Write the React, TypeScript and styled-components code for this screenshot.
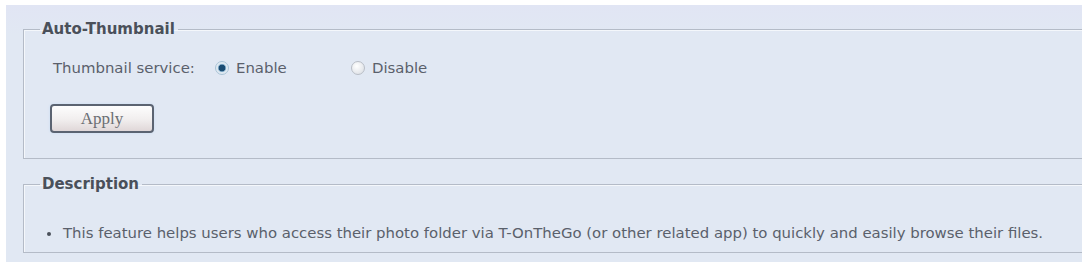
import React, { useState } from 'react';
import styled, { createGlobalStyle } from 'styled-components';

const GlobalStyle = createGlobalStyle`
  html, body {
    margin: 0;
    padding: 0;
    background: #ffffff;
    overflow: hidden;
  }
  body {
    font-family: "DejaVu Sans", Verdana, sans-serif;
    font-size: 14.9px;
    color: #5a606b;
  }
`

const Panel = styled.div`
  margin: 5px 2px 0 6px;
  height: 257px;
  background: linear-gradient(#e1e5f4 0px, #e1e8f3 30px, #e1e8f3 100%);
  padding: 0 0 0 17px;
  box-sizing: border-box;
  overflow: hidden;
`

const Group = styled.fieldset<{ $top: number; $height: number }>`
  margin: ${(p) => p.$top}px -30px 0 0;
  height: ${(p) => p.$height}px;
  padding: 0 0 0 16px;
  border: 1px solid #b4bbc7;
  border-right: none;
  box-shadow: inset 1px 1px 0 #f4f7fb;
  box-sizing: border-box;
  min-width: 0;
`

const Legend = styled.legend`
  padding: 0 3px 0 2px;
  font-size: 15px;
  line-height: 18px;
  font-weight: bold;
  color: #4a505a;
`

const Row = styled.div`
  display: flex;
  align-items: center;
  height: 20px;
  margin: 20px 0 0 13px;
`

const Label = styled.span`
  width: 162px;
  white-space: nowrap;
`

const Choice = styled.label<{ $width?: number }>`
  display: flex;
  align-items: center;
  gap: 7px;
  width: ${(p) => (p.$width ? `${p.$width}px` : 'auto')};
  white-space: nowrap;
  cursor: pointer;
`

const Radio = styled.input`
  appearance: none;
  margin: 0;
  flex: none;
  width: 14px;
  height: 14px;
  border-radius: 50%;
  border: 1px solid #b9bec6;
  background: radial-gradient(circle at 40% 35%, #ffffff, #d7dbe1);
  box-sizing: border-box;
  &:checked {
    border-color: #a9c3d6;
    background: radial-gradient(circle, #1b4c72 0 3px, #6f9bbb 3.5px, #dbe7f0 4.5px, #eef3f7 100%);
  }
`

const ApplyButton = styled.button`
  display: block;
  margin: 26px 0 0 10px;
  width: 104px;
  height: 29px;
  border: 2px solid #5b6371;
  border-radius: 4px;
  background: linear-gradient(#fdfdfd, #f1eeee 55%, #e0d7d8);
  box-shadow: 0 0 3px #c9dcf2;
  font-family: "Liberation Serif", "Times New Roman", serif;
  font-size: 17px;
  color: #6b6e73;
  padding: 0;
  cursor: pointer;
`

const Bullet = styled.ul`
  margin: 31px 0 0 0;
  padding: 0 0 0 23px;
  list-style: none;
  li {
    position: relative;
    line-height: 18px;
    white-space: nowrap;
  }
  li::before {
    content: '';
    position: absolute;
    left: -16px;
    top: 8px;
    width: 4px;
    height: 4px;
    border-radius: 50%;
    background: #4a505a;
  }
`

export default function App() {
  const [service, setService] = useState('enable')

  return (
    <>
      <GlobalStyle />
      <Panel>
        <Group $top={15} $height={139}>
          <Legend>Auto-Thumbnail</Legend>
          <Row>
            <Label>Thumbnail service:</Label>
            <Choice $width={136}>
              <Radio
                type="radio"
                name="thumb"
                checked={service === 'enable'}
                onChange={() => setService('enable')}
              />
              Enable
            </Choice>
            <Choice>
              <Radio
                type="radio"
                name="thumb"
                checked={service === 'disable'}
                onChange={() => setService('disable')}
              />
              Disable
            </Choice>
          </Row>
          <ApplyButton>Apply</ApplyButton>
        </Group>
        <Group $top={16} $height={78}>
          <Legend>Description</Legend>
          <Bullet>
            <li>This feature helps users who access their photo folder via T-OnTheGo (or other related app) to quickly and easily browse their files.</li>
          </Bullet>
        </Group>
      </Panel>
    </>
  )
}
